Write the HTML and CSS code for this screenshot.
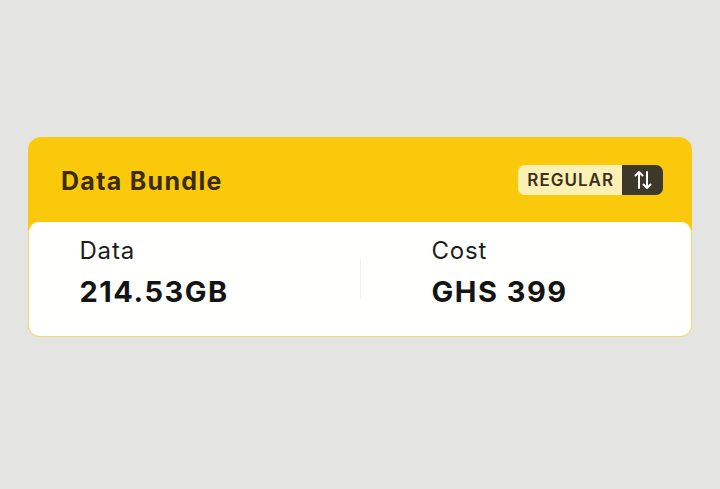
FILE: index.html
```html
<!DOCTYPE html>
<html>
<head>
<meta charset="utf-8">
<link rel="stylesheet" href="styles.css">
</head>
<body>
<div class="page">
  <div class="card">
    <div class="card-head">
      <h2 class="title">Data Bundle</h2>
      <div class="badge">
        <span class="badge-label">REGULAR</span>
        <span class="badge-icon">
          <svg width="22" height="24" viewBox="0 0 22 24" fill="none" stroke="#ffffff" stroke-width="2" stroke-linecap="round" stroke-linejoin="round">
            <path d="M7 20V4M3.5 7.5L7 4l3.5 3.5"/>
            <path d="M15 4v16M11.5 16.5L15 20l3.5-3.5"/>
          </svg>
        </span>
      </div>
    </div>
    <div class="card-body">
      <div class="stat stat-left">
        <div class="stat-label">Data</div>
        <div class="stat-value">214.53GB</div>
      </div>
      <div class="divider"></div>
      <div class="stat stat-right">
        <div class="stat-label">Cost</div>
        <div class="stat-value">GHS 399</div>
      </div>
    </div>
  </div>
</div>
</body>
</html>
```
FILE: styles.css
```css
html, body {
  margin: 0;
  padding: 0;
}
body {
  background: #e4e4e3;
  font-family: "Inter", "Open Sans", sans-serif;
  width: 720px;
  height: 489px;
  overflow: hidden;
}
.page {
  padding: 137px 28px 0 28px;
}
.card {
  background: #fac90b;
  border-radius: 13px;
}
.card-head {
  height: 85px;
  display: flex;
  align-items: center;
  justify-content: space-between;
  padding: 0 29px 0 33px;
}
.title {
  margin: 0;
  font-size: 25px;
  font-weight: 700;
  color: #3b2b08;
  letter-spacing: 1.3px;
  padding-top: 2px;
}
.badge {
  display: flex;
  height: 30px;
  border-radius: 7px;
  overflow: hidden;
}
.badge-label {
  background: #fdf0b4;
  color: #3a311c;
  font-weight: 600;
  font-size: 17px;
  letter-spacing: 1px;
  padding: 0 8px 0 9px;
  display: flex;
  align-items: center;
}
.badge-icon {
  background: #3d382a;
  width: 41px;
  display: flex;
  align-items: center;
  justify-content: center;
}
.card-body {
  background: #fffffe;
  border: 1.5px solid #f1d97a;
  border-top: none;
  border-radius: 11px;
  height: 114px;
  display: flex;
  align-items: center;
}
.stat {
  display: flex;
  flex-direction: column;
  gap: 10px;
  padding-bottom: 14px;
}
.stat-left {
  width: 330.5px;
  box-sizing: border-box;
  padding-left: 50.5px;
}
.stat-right {
  padding-left: 70.5px;
}
.stat-label {
  font-size: 24px;
  color: #1d1d1d;
  line-height: 29px;
  letter-spacing: 0.8px;
}
.stat-value {
  font-size: 29px;
  font-weight: 700;
  color: #141414;
  line-height: 34px;
  letter-spacing: 1.5px;
}
.divider {
  width: 1.5px;
  height: 40px;
  background: #efefef;
}
```
